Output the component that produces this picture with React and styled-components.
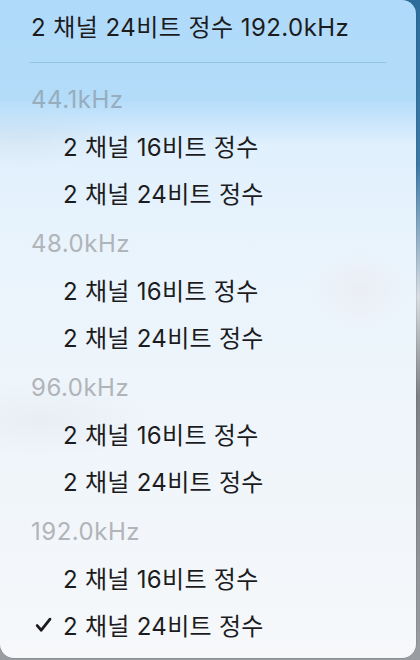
import React from "react";
import styled, { createGlobalStyle } from "styled-components";

const GlobalStyle = createGlobalStyle`
  html, body {
    margin: 0;
    padding: 0;
  }
  body {
    width: 420px;
    height: 660px;
    overflow: hidden;
    background: linear-gradient(180deg, #2b6c9b 0%, #3d79a6 25%, #d8dde2 45%, #7d8186 60%, #9a9da1 100%);
    font-family: Inter, "Noto Sans CJK KR", sans-serif;
  }
`;

const Menu = styled.div`
  width: 416px;
  height: 658px;
  box-sizing: border-box;
  border-radius: 0 14px 14px 14px;
  padding-top: 4px;
  background:
    radial-gradient(ellipse 90px 30px at 20px 140px, rgba(150, 160, 170, 0.1), transparent),
    radial-gradient(ellipse 50px 40px at 360px 290px, rgba(245, 190, 195, 0.12), transparent),
    radial-gradient(ellipse 120px 40px at 40px 420px, rgba(150, 160, 170, 0.08), transparent),
    linear-gradient(180deg, #b0dafa 0%, #b3dcf9 15%, #c6e4fb 18%, #e0f0fd 22%, #eaf4fc 40%, #eef5fb 60%, #f2f6fa 80%, #f6f8fa 100%);
  box-shadow: 0 0 0 0.5px rgba(0, 0, 0, 0.15);
`;

const Title = styled.div`
  height: 48px;
  box-sizing: border-box;
  padding: 0 0 5px 31px;
  display: flex;
  align-items: center;
  font-size: 24px;
  letter-spacing: 0.45px;
  color: #1c1c1e;
`;

const Separator = styled.div`
  height: 1px;
  margin: 10px 30px 12px 30px;
  background: rgba(80, 130, 170, 0.28);
`;

const Header = styled.div`
  height: 49px;
  display: flex;
  align-items: center;
  padding-left: 31px;
  font-size: 24px;
  letter-spacing: 0.5px;
  color: ${(p) => (p.onBlue ? "#97adbd" : "#b1b4b8")};
`;

const Item = styled.div`
  height: 47.5px;
  box-sizing: border-box;
  padding: 0 0 5px 63px;
  display: flex;
  align-items: center;
  position: relative;
  font-size: 24px;
  letter-spacing: 0.3px;
  color: #1c1c1e;
`;

const Check = styled.svg`
  position: absolute;
  left: 35px;
  top: 50%;
  margin-top: -10px;
  width: 17px;
  height: 16px;
`;

const groups = ["44.1kHz", "48.0kHz", "96.0kHz", "192.0kHz"];

const App = () => {
  return (
    <>
      <GlobalStyle />
      <Menu>
        <Title>2 채널 24비트 정수 192.0kHz</Title>
        <Separator />
        {groups.map((rate, gi) => (
          <React.Fragment key={rate}>
            <Header onBlue={gi === 0}>{rate}</Header>
            <Item>2 채널 16비트 정수</Item>
            <Item>
              {gi === groups.length - 1 && (
                <Check viewBox="0 0 17 16">
                  <path
                    d="M2.2 8.6 L6.3 13.2 L15 2.2"
                    fill="none"
                    stroke="#1c1c1e"
                    strokeWidth="2.8"
                    strokeLinecap="round"
                    strokeLinejoin="round"
                  />
                </Check>
              )}
              2 채널 24비트 정수
            </Item>
          </React.Fragment>
        ))}
      </Menu>
    </>
  );
};

export default App;
